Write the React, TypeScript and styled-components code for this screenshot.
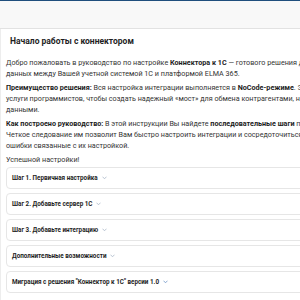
import React from 'react';
import styled, { createGlobalStyle } from 'styled-components';

const GlobalStyle = createGlobalStyle`
  html, body {
    margin: 0;
    padding: 0;
    background: #ffffff;
    overflow: hidden;
  }
  body {
    font-family: Roboto, "Noto Sans", "Liberation Sans", sans-serif;
    -webkit-font-smoothing: antialiased;
  }
`;

const Page = styled.div`
  width: 460px;
  height: 300px;
  display: flex;
  flex-direction: column;
`;

const TopBar = styled.div`
  height: 27px;
  flex-shrink: 0;
  background: #f8f8f8;
  border-top: 1px solid #1f4e7d;
  border-bottom: 1px solid #e2e2e2;
`;

const Panel = styled.div`
  flex: 1;
  border-left: 1px solid #ededed;
  padding: 0 0 0 5px;
  display: flex;
  flex-direction: column;
`;

const Title = styled.h1`
  margin: 0;
  padding: 6px 0 0 4px;
  height: 18px;
  font-size: 8.5px;
  line-height: 12px;
  font-weight: 700;
  color: #1e1e1e;
`;

const Body = styled.div`
  padding-top: 4px;
  display: flex;
  flex-direction: column;
  gap: 3px;
`;

const Para = styled.p`
  margin: 0;
  font-size: 7.2px;
  line-height: 11px;
  color: #333333;
  white-space: nowrap;
  b {
    font-weight: 700;
    color: #1c1c1c;
  }
`;

const Steps = styled.div`
  margin-top: 2px;
  display: flex;
  flex-direction: column;
  gap: 4px;
`;

const Step = styled.div`
  height: 20px;
  border: 1px solid #e6e6e6;
  border-radius: 4px;
  padding-left: 5px;
  display: flex;
  align-items: center;
  gap: 4px;
  font-size: 6.3px;
  font-weight: 700;
  color: #1e1e1e;
`;

const Chevron = ({ color }: { color: string }) => (
  <svg width="5" height="4" viewBox="0 0 5 4" fill="none">
    <polyline points="0.8,1 2.5,2.8 4.2,1" stroke={color} strokeWidth="0.8" strokeLinecap="round" />
  </svg>
);

const steps = [
  'Шаг 1. Первичная настройка',
  'Шаг 2. Добавьте сервер 1С',
  'Шаг 3. Добавьте интеграцию',
  'Дополнительные возможности',
  'Миграция с решения "Коннектор к 1С" версии 1.0',
];

const App: React.FC = () => {
  return (
    <Page>
      <GlobalStyle />
      <TopBar />
      <Panel>
        <Title>Начало работы с коннектором</Title>
        <Body>
          <Para>
            Добро пожаловать в руководство по настройке <b>Коннектора к 1С</b> — готового решения для автоматизации обмена
            <br />
            данных между Вашей учетной системой 1С и платформой ELMA 365.
          </Para>
          <Para>
            <b>Преимущество решения:</b> Вся настройка интеграции выполняется в <b>NoCode-режиме</b>. Это значит, что Вам не потребуются
            <br />
            услуги программистов, чтобы создать надежный «мост» для обмена контрагентами, номенклатурой и другими
            <br />
            данными.
          </Para>
          <Para>
            <b>Как построено руководство:</b> В этой инструкции Вы найдете <b>последовательные шаги</b> по настройке интеграции.
            <br />
            Четкое следование им позволит Вам быстро настроить интеграции и сосредоточиться на бизнес-задачах, а не
            <br />
            ошибки связанные с их настройкой.
          </Para>
          <Para>Успешной настройки!</Para>
        </Body>
        <Steps>
          {steps.map((s, i) => (
            <Step key={s}>
              {s}
              <Chevron color={i === 4 ? '#6f96c8' : '#a9b8c8'} />
            </Step>
          ))}
        </Steps>
      </Panel>
    </Page>
  );
};

export default App;
